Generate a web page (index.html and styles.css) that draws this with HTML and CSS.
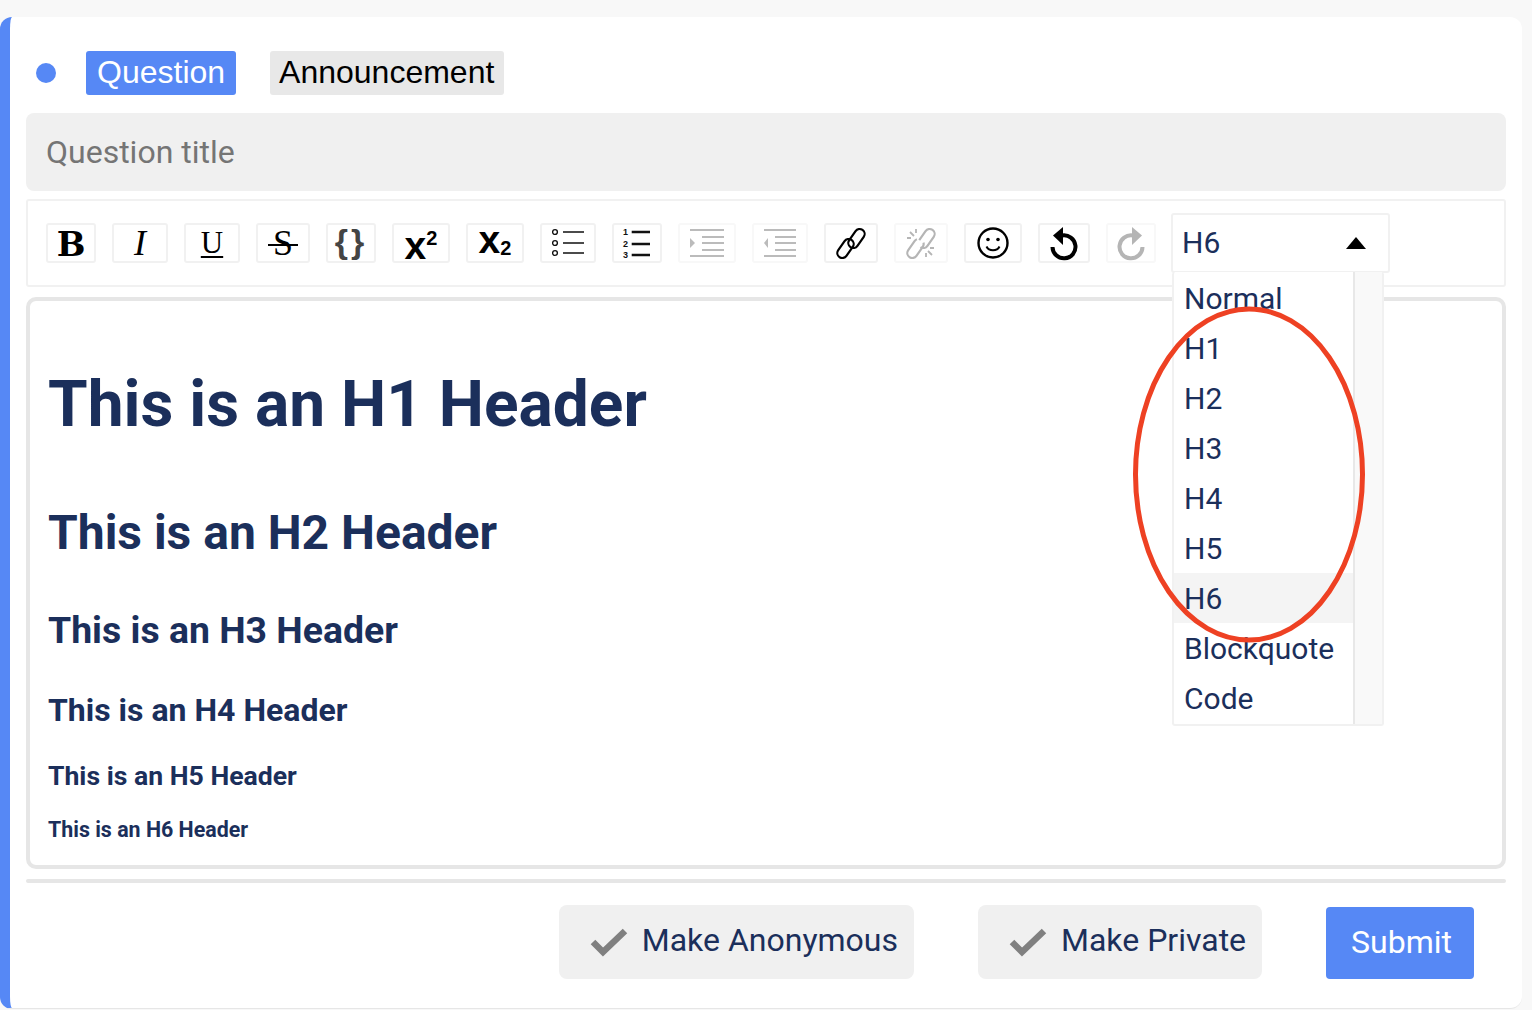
FILE: index.html
```html
<!DOCTYPE html>
<html>
<head>
<title>New post</title>
<link rel="stylesheet" href="styles.css">
</head>
<body>
<div class="card">
  <div class="type-row">
    <span class="dot"></span>
    <span class="tag tag-on">Question</span>
    <span class="tag">Announcement</span>
  </div>

  <div class="title-input">Question title</div>

  <div class="toolbar">
    <div class="tool w50 bold">B</div>
    <div class="tool w56 ital">I</div>
    <div class="tool w56 under">U</div>
    <div class="tool w54 strike">S</div>
    <div class="tool w50 braces">{}</div>
    <div class="tool w58 script"><span>x</span><sup>2</sup></div>
    <div class="tool w58 script sub"><span>x</span><sub>2</sub></div>
    <div class="tool w56">
      <svg width="32" height="32" viewBox="0 0 32 32" fill="none" stroke="#111" stroke-width="1.4">
        <circle cx="3" cy="5" r="2.4"/><circle cx="3" cy="16" r="2.4"/><circle cx="3" cy="26" r="2.4"/>
        <path d="M11 5H32M11 16H32M11 26H32"/>
      </svg>
    </div>
    <div class="tool w50">
      <svg width="32" height="32" viewBox="0 0 32 32" fill="none" stroke="#111" stroke-width="2.6">
        <path d="M10.700 5H29M10.700 17H29M10.700 28H29"/>
        <text class="nums" x="2" y="8">1</text><text class="nums" x="2" y="20">2</text><text class="nums" x="2" y="31">3</text>
      </svg>
    </div>
    <div class="tool w58 off">
      <svg width="40" height="40" viewBox="0 0 40 40" fill="none" stroke="#bbb" stroke-width="2">
        <path d="M3 7H37M15 14H37M15 20H37M15 27H37M3 33H37"/>
        <path d="M3 15L8 20L3 25Z" fill="#bbb" stroke="none"/>
      </svg>
    </div>
    <div class="tool w56 off">
      <svg width="40" height="40" viewBox="0 0 40 40" fill="none" stroke="#bbb" stroke-width="2">
        <path d="M4 7H36M15 14H36M15 20H36M15 27H36M4 33H36"/>
        <path d="M8 15L4 20L8 25Z" fill="#bbb" stroke="none"/>
      </svg>
    </div>
    <div class="tool w54">
      <svg width="32" height="32" viewBox="0 0 32 32" fill="none" stroke="#000" stroke-width="2.200">
        <rect x="11" y="6.500" width="21" height="10" rx="5" transform="rotate(-55 21.500 11.500)"/>
        <rect x="0" y="16.500" width="21" height="10" rx="5" transform="rotate(-55 10.500 21.500)"/>
      </svg>
    </div>
    <div class="tool w54 off">
      <svg width="32" height="32" viewBox="0 0 32 32" fill="none" stroke="#b5b5b5" stroke-width="2.200">
        <rect x="11" y="6.500" width="21" height="10" rx="5" stroke-dasharray="45 8" transform="rotate(-55 21.500 11.500)"/>
        <rect x="0" y="16.500" width="21" height="10" rx="5" stroke-dasharray="14 8 31 0" transform="rotate(-55 10.500 21.500)"/>
        <path d="M5 5L9 9M11 2V6M2 11H6M27 28L23 24M21 30V26M29 21H25" stroke-width="1.800"/>
      </svg>
    </div>
    <div class="tool w58">
      <svg width="32" height="32" viewBox="0 0 32 32" fill="none" stroke="#000" stroke-width="2.400">
        <circle cx="16" cy="16" r="14.500"/>
        <circle cx="11" cy="12.500" r="1.800" fill="#000" stroke="none"/>
        <circle cx="21" cy="12.500" r="1.800" fill="#000" stroke="none"/>
        <path d="M9.500 19.500C12 24.500 20 24.500 22.500 19.500" stroke-width="2"/>
      </svg>
    </div>
    <div class="tool w52">
      <svg width="32" height="36" viewBox="0 0 32 36" fill="none" stroke="#000" stroke-width="4">
        <path d="M14 10.500A11.500 11.500 0 1 1 4.500 22"/>
        <path d="M5 10.500L15 2V20Z" fill="#000" stroke="none"/>
      </svg>
    </div>
    <div class="tool w50 off">
      <svg width="32" height="36" viewBox="0 0 32 36" fill="none" stroke="#b5b5b5" stroke-width="4">
        <path d="M18 10.500A11.500 11.500 0 1 0 27.500 22"/>
        <path d="M27 10.500L17 2V20Z" fill="#b5b5b5" stroke="none"/>
      </svg>
    </div>

    <div class="select">
      <span>H6</span>
      <span class="caret"></span>
      <div class="menu">
        <ul class="menu-list">
          <li>Normal</li>
          <li>H1</li>
          <li>H2</li>
          <li>H3</li>
          <li>H4</li>
          <li>H5</li>
          <li class="current">H6</li>
          <li>Blockquote</li>
          <li>Code</li>
        </ul>
        <div class="menu-scroll"></div>
      </div>
    </div>
  </div>

  <div class="editor">
    <h1>This is an H1 Header</h1>
    <h2>This is an H2 Header</h2>
    <h3>This is an H3 Header</h3>
    <h4>This is an H4 Header</h4>
    <h5>This is an H5 Header</h5>
    <h6>This is an H6 Header</h6>
  </div>

  <div class="divider"></div>

  <div class="footer">
    <div class="opt">
      <svg width="38" height="32" viewBox="0 0 38 32" fill="none" stroke="#808080" stroke-width="6.500"><path d="M3 16L13 26L35 5"/></svg>
      Make Anonymous
    </div>
    <div class="opt">
      <svg width="38" height="32" viewBox="0 0 38 32" fill="none" stroke="#808080" stroke-width="6.500"><path d="M3 16L13 26L35 5"/></svg>
      Make Private
    </div>
    <div class="submit">Submit</div>
  </div>

  <svg class="circle" width="240" height="345" viewBox="0 0 240 345" fill="none">
    <ellipse cx="120" cy="172.500" rx="113.500" ry="165.500" stroke="#ee4123" stroke-width="5"/>
  </svg>
</div>
</body>
</html>
```

FILE: styles.css
```css
html, body { margin: 0; height: 100%; overflow: hidden; }
body { background: #f8f8f8; font-family: Roboto, sans-serif; color: #1b2f5b; }

.card { position: relative; box-sizing: border-box; width: 1522px; height: 992px; margin-top: 17px;
        padding: 34px 16px 0 16px; background: #fff; border-left: 10px solid #5688f5;
        border-bottom: 1px solid #e6e6e6; border-radius: 12px; }

.type-row { display: flex; align-items: center; height: 44px; }
.dot { width: 20px; height: 20px; margin-left: 10px; margin-right: 30px; border-radius: 50%; background: #5688f5; }
.tag { height: 44px; margin-right: 34px; padding: 0 10px 0 9px; border-radius: 3px; background: #e8e8e8;
       color: #000; font: 32px/42px "Liberation Sans", Arial, sans-serif; }
.tag-on { padding: 0 11px; background: #5688f5; color: #fff; }

.title-input { box-sizing: border-box; height: 78px; margin-top: 18px; padding-left: 20px; background: #f0f0f0;
               border-radius: 8px; color: #757575; font-size: 32px; line-height: 78px; }

.toolbar { box-sizing: border-box; display: flex; gap: 16px; align-items: flex-start; height: 88px; margin-top: 8px;
           padding: 22px 0 0 18px; border: 2px solid #f1f1f1; border-radius: 3px; }
.tool { box-sizing: border-box; position: relative; display: flex; align-items: center; justify-content: center; height: 40px;
        border: 2px solid #f1f1f1; border-radius: 3px; color: #000; }
.off { border-color: #f8f8f8; }
.w50 { width: 50px; }
.w52 { width: 52px; }
.w54 { width: 54px; }
.w56 { width: 56px; }
.w58 { width: 58px; }

.bold { padding-top: 2px; font: bold 34px/36px "DejaVu Serif", serif; }
.ital { font: italic 36px/36px "Liberation Serif", serif; }
.under { font: 31px/36px "Liberation Serif", serif; text-decoration: underline; text-decoration-thickness: 2px; text-underline-offset: 3px; }
.strike { font: 36px/36px "Liberation Serif", serif; }
.strike::after { content: ""; position: absolute; left: 10px; right: 10px; top: 19px; height: 2px; background: #000; }
.braces { padding-bottom: 4px; color: #444; font: bold 34px/36px "Liberation Sans", sans-serif; letter-spacing: 3px; }
.script { font: bold 39px/36px "Liberation Sans", sans-serif; }
.script sup, .script sub { font-size: 20px; line-height: 0; }
.script span { position: relative; top: 3px; }
.script sup { position: relative; top: -5px; vertical-align: super; }
.sub span { top: -3px; }
.script sub { position: relative; top: 5px; vertical-align: sub; }
.nums { fill: #111; stroke: none; font: bold 9px "Liberation Sans", sans-serif; }

.select { box-sizing: border-box; position: relative; display: flex; align-items: center; justify-content: space-between;
          width: 219px; height: 60px; margin: -10px 0 0 -1px; padding: 0 22px 2px 9px; border: 2px solid #f1f1f1;
          border-radius: 3px; background: #fff; font-size: 30px; }
.caret { margin-top: 2px; border-left: 10px solid transparent; border-right: 10px solid transparent; border-bottom: 12px solid #000; }

.menu { position: absolute; top: 57px; left: -1px; box-sizing: border-box; display: flex; width: 212px; height: 454px;
        background: #fff; border: 2px solid #f1f1f1; border-top: 0; border-radius: 3px; z-index: 2; }
.menu-list { flex: 1; margin: 0; padding: 1px 0 0 0; list-style: none; border-right: 2px solid #e8e8e8; }
.menu-list li { height: 50px; padding-left: 10px; font-size: 30px; line-height: 52px; }
.menu-list li.current { background: #f4f4f4; }
.menu-scroll { width: 27px; background: #f9f9f9; }

.editor { box-sizing: border-box; height: 572px; margin-top: 10px; padding: 0 18px; border: 4px solid #e6e6e6; border-radius: 10px; }
.editor h1, .editor h2, .editor h3, .editor h4, .editor h5, .editor h6 { margin: 0; font-weight: 700; }
.editor h1 { margin-top: 64px; font-size: 64px; line-height: 80px; }
.editor h2 { margin-top: 60px; font-size: 48px; line-height: 56px; }
.editor h3 { margin-top: 47px; font-size: 37.400px; line-height: 44px; }
.editor h4 { margin-top: 39px; font-size: 32px; line-height: 38px; }
.editor h5 { margin-top: 31px; font-size: 26.600px; line-height: 32px; }
.editor h6 { margin-top: 25px; font-size: 21.400px; line-height: 26px; }

.divider { height: 4px; margin-top: 10px; background: #e6e6e6; border-radius: 2px; }

.footer { display: flex; align-items: flex-end; justify-content: flex-end; gap: 64px; margin-top: 22px; padding-right: 32px; font-size: 32px; }
.opt { box-sizing: border-box; display: flex; align-items: center; gap: 14px; height: 74px; padding: 0 16px 4px 31px; background: #f0f0f0; border-radius: 8px; }
.opt svg { margin-top: 4px; }
.submit { box-sizing: border-box; height: 72px; padding: 0 22px 0 25px; background: #5688f5; color: #fff; border-radius: 4px; line-height: 70px; }

.circle { position: absolute; left: 1119px; top: 285px; z-index: 3; }
```
